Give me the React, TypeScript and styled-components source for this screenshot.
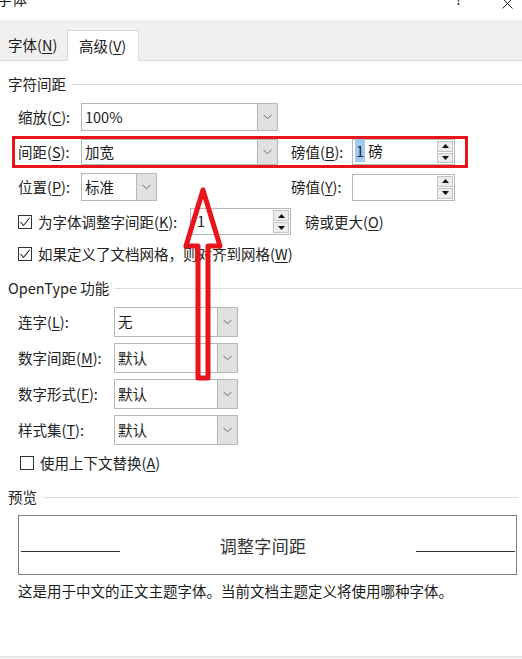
import styled, { createGlobalStyle } from 'styled-components';

const GlobalStyle = createGlobalStyle`
  html, body {
    margin: 0;
    padding: 0;
    background: #fff;
  }
  body {
    font-family: 'Noto Sans CJK SC', 'Microsoft YaHei', sans-serif;
    font-size: 14.5px;
    color: #1a1a1a;
    overflow: hidden;
  }
`;

const Acc = styled.span`
  text-decoration: underline;
  text-underline-offset: 2px;
  text-decoration-thickness: 1px;
`;

const Chevron = () => (
  <svg width='9' height='6' viewBox='0 0 9 6'>
    <polyline points='0.5,0.8 4.5,4.8 8.5,0.8' fill='none' stroke='#6b6b6b' strokeWidth='1' />
  </svg>
);

const Tri = ({ down }: { down?: boolean }) => (
  <svg width='7' height='4' viewBox='0 0 7 4'>
    <polygon points={down ? '0,0 7,0 3.5,4' : '3.5,0 7,4 0,4'} fill='#111' />
  </svg>
);

const CheckMark = () => (
  <svg width='12' height='12' viewBox='0 0 12 12'>
    <polyline points='1.5,6 4.5,9.5 10.5,2' fill='none' stroke='#222' strokeWidth='1.1' />
  </svg>
);

const Combo = ({
  value,
  width,
  height = 28
}: {
  value: string;
  width: number;
  height?: number;
}) => (
  <ComboBox $w={width} $h={height}>
    <span className='value'>{value}</span>
    <DropButton>
      <Chevron />
    </DropButton>
  </ComboBox>
);

const Spinner = ({
  children,
  width,
  height = 27,
  pad = 2
}: {
  children?: React.ReactNode;
  width: number;
  height?: number;
  pad?: number;
}) => (
  <SpinBox $w={width} $h={height} $pad={pad}>
    <span className='value'>{children}</span>
    <SpinButtons>
      <SpinButton>
        <Tri />
      </SpinButton>
      <SpinButton>
        <Tri down />
      </SpinButton>
    </SpinButtons>
  </SpinBox>
);

const Check = ({ checked }: { checked?: boolean }) => (
  <CheckBox>{checked && <CheckMark />}</CheckBox>
);

const App = () => {
  return (
    <>
      <GlobalStyle />
      <Dialog>
        <TitleBar>
          <span className='title'>字体</span>
          <span className='help'>?</span>
          <svg className='close' width='11' height='11' viewBox='0 0 11 11'>
            <path d='M0.5,0.5 L10.5,10.5 M10.5,0.5 L0.5,10.5' stroke='#222' strokeWidth='1' />
          </svg>
        </TitleBar>

        <TabStrip>
          <Tab>
            字体(<Acc>N</Acc>)
          </Tab>
          <Tab $active>
            高级(<Acc>V</Acc>)
          </Tab>
        </TabStrip>

        <Body>
          <SectionHeader $top={13}>字符间距</SectionHeader>

          <SpacingRow $top={9}>
            <Label>
              缩放(<Acc>C</Acc>):
            </Label>
            <Combo value='100%' width={197} />
          </SpacingRow>

          <Highlight>
            <SpacingRow $left={0}>
              <Label>
                间距(<Acc>S</Acc>):
              </Label>
              <Combo value='加宽' width={197} height={26} />
              <span />
              <Label>
                磅值(<Acc>B</Acc>):
              </Label>
              <Spinner width={103} height={26}>
                <Selected>1</Selected> 磅
              </Spinner>
            </SpacingRow>
          </Highlight>

          <SpacingRow $top={5}>
            <Label>
              位置(<Acc>P</Acc>):
            </Label>
            <Combo value='标准' width={76} />
            <span />
            <Label>
              磅值(<Acc>Y</Acc>):
            </Label>
            <Spinner width={103} height={27} />
          </SpacingRow>

          <CheckRow $top={7} $h={27}>
            <Check checked />
            <CheckText $w={152}>
              为字体调整字间距(<Acc>K</Acc>):
            </CheckText>
            <Spinner width={101} height={27} pad={6}>
              1
            </Spinner>
            <Label className='after'>
              磅或更大(<Acc>O</Acc>)
            </Label>
          </CheckRow>

          <CheckRow $top={9} $h={20}>
            <Check checked />
            <CheckText>
              如果定义了文档网格，则对齐到网格(<Acc>W</Acc>)
            </CheckText>
          </CheckRow>

          <SectionHeader $top={14}>OpenType 功能</SectionHeader>

          <FeatureGrid>
            <Label>
              连字(<Acc>L</Acc>):
            </Label>
            <Combo value='无' width={124} height={30} />
            <Label>
              数字间距(<Acc>M</Acc>):
            </Label>
            <Combo value='默认' width={124} height={30} />
            <Label>
              数字形式(<Acc>F</Acc>):
            </Label>
            <Combo value='默认' width={124} height={30} />
            <Label>
              样式集(<Acc>T</Acc>):
            </Label>
            <Combo value='默认' width={124} height={30} />
          </FeatureGrid>

          <CheckRow $top={8} $h={20} $indent={12}>
            <Check />
            <CheckText>
              使用上下文替换(<Acc>A</Acc>)
            </CheckText>
          </CheckRow>

          <SectionHeader $top={14} $right={4}>
            预览
          </SectionHeader>

          <PreviewBox>
            <PreviewLine $left={2} />
            <PreviewText>调整字间距</PreviewText>
            <PreviewLine $right={1} />
          </PreviewBox>

          <Description>
            这是用于中文的正文主题字体。当前文档主题定义将使用哪种字体。
          </Description>
        </Body>

        <Footer />

        <ArrowOverlay width='522' height='659' viewBox='0 0 522 659'>
          <polygon
            points='203,190 220,246 208,246 208,378 198,378 198,246 186,246'
            fill='none'
            stroke='#e8141c'
            strokeWidth='5'
            strokeLinejoin='round'
          />
        </ArrowOverlay>
      </Dialog>
    </>
  );
};

const Dialog = styled.div`
  position: relative;
  width: 522px;
  height: 659px;
  display: flex;
  flex-direction: column;
  overflow: hidden;
  background: #fff;
`;

const TitleBar = styled.div`
  height: 20px;
  display: flex;
  align-items: flex-start;
  line-height: 20px;

  .title {
    margin: -11px 0 0 -3px;
    font-size: 15px;
  }

  .help {
    margin: -11px 0 0 auto;
    font-size: 14px;
    color: #333;
  }

  .close {
    margin: -2px 9px 0 40px;
  }
`;

const TabStrip = styled.div`
  height: 40px;
  display: flex;
  align-items: flex-end;
  background: #f0f0f0;
  border-bottom: 1px solid #d9d9d9;
`;

const Tab = styled.div<{ $active?: boolean }>`
  box-sizing: border-box;
  height: ${({ $active }) => ($active ? '31px' : '30px')};
  margin-bottom: ${({ $active }) => ($active ? '-1px' : '0')};
  padding: 2px 0 0 ${({ $active }) => ($active ? '11px' : '8px')};
  width: ${({ $active }) => ($active ? '72px' : '67px')};
  line-height: 26px;
  background: ${({ $active }) => ($active ? '#fff' : 'transparent')};
  border: ${({ $active }) => ($active ? '1px solid #d9d9d9' : 'none')};
  border-bottom: none;
`;

const Body = styled.div`
  padding-left: 8px;
  display: flex;
  flex-direction: column;
`;

const SectionHeader = styled.div<{ $top: number; $right?: number }>`
  display: flex;
  align-items: center;
  gap: 6px;
  height: 20px;
  line-height: 20px;
  margin-top: ${({ $top }) => $top}px;
  margin-right: ${({ $right }) => $right ?? 0}px;
  color: #222;

  &::after {
    content: '';
    flex: 1;
    height: 1px;
    background: #dcdcdc;
  }
`;

const Label = styled.span`
  line-height: 20px;
  white-space: nowrap;
  color: #222;

  &.after {
    margin-left: 14px;
  }
`;

const SpacingRow = styled.div<{ $top?: number; $left?: number }>`
  display: grid;
  grid-template-columns: 63px 197px 13px 61px 103px;
  align-items: center;
  justify-items: start;
  margin-left: ${({ $left }) => $left ?? 10}px;
  margin-top: ${({ $top }) => $top ?? 0}px;
`;

const Highlight = styled.div`
  align-self: flex-start;
  margin: 5px 0 0 4px;
  padding: 0 10px 0 3px;
  border: 3px solid #e8141c;
`;

const ComboBox = styled.div<{ $w: number; $h: number }>`
  box-sizing: border-box;
  width: ${({ $w }) => $w}px;
  height: ${({ $h }) => $h}px;
  display: flex;
  border: 1px solid #b7b7b7;
  background: #fff;

  .value {
    flex: 1;
    padding-left: 3px;
    line-height: ${({ $h }) => $h - 3}px;
    white-space: nowrap;
    overflow: hidden;
  }
`;

const DropButton = styled.div`
  width: 19px;
  display: flex;
  align-items: center;
  justify-content: center;
  background: #e1e1e1;
  border-left: 1px solid #b7b7b7;
`;

const SpinBox = styled.div<{ $w: number; $h: number; $pad: number }>`
  box-sizing: border-box;
  width: ${({ $w }) => $w}px;
  height: ${({ $h }) => $h}px;
  display: flex;
  align-items: stretch;
  border: 1px solid #b7b7b7;
  background: #fff;

  .value {
    flex: 1;
    padding-left: ${({ $pad }) => $pad}px;
    line-height: ${({ $h }) => $h - 4}px;
    white-space: nowrap;
  }
`;

const SpinButtons = styled.div`
  width: 16px;
  margin: 1px 1px 1px 0;
  display: flex;
  flex-direction: column;
  gap: 1px;
`;

const SpinButton = styled.div`
  flex: 1;
  display: flex;
  align-items: center;
  justify-content: center;
  background: #ececec;
  border: 1px solid #c4c4c4;
`;

const Selected = styled.span`
  background: #9dcbf1;
  padding: 1px 1px;
`;

const CheckRow = styled.div<{ $top: number; $h: number; $indent?: number }>`
  display: flex;
  align-items: center;
  height: ${({ $h }) => $h}px;
  margin-top: ${({ $top }) => $top}px;
  margin-left: ${({ $indent }) => $indent ?? 10}px;
`;

const CheckBox = styled.div`
  box-sizing: border-box;
  width: 14px;
  height: 14px;
  border: 1px solid #333;
  background: #fff;
  display: flex;
  align-items: center;
  justify-content: center;
  margin-right: 6px;
`;

const CheckText = styled.span<{ $w?: number }>`
  line-height: 20px;
  white-space: nowrap;
  color: #222;
  width: ${({ $w }) => ($w ? `${$w}px` : 'auto')};
`;

const FeatureGrid = styled.div`
  display: grid;
  grid-template-columns: 96px 124px;
  grid-auto-rows: 30px;
  row-gap: 6px;
  align-items: center;
  margin: 9px 0 0 10px;
`;

const PreviewBox = styled.div`
  box-sizing: border-box;
  width: 499px;
  height: 60px;
  margin: 8px 0 0 10px;
  border: 1px solid #7d7d7d;
  display: flex;
  align-items: flex-start;
`;

const PreviewLine = styled.div<{ $left?: number; $right?: number }>`
  width: 99px;
  height: 1px;
  margin-top: 35px;
  margin-left: ${({ $left }) => $left ?? 0}px;
  margin-right: ${({ $right }) => $right ?? 0}px;
  background: #333;
`;

const PreviewText = styled.div`
  flex: 1;
  text-align: center;
  padding-right: 10px;
  margin-top: 18px;
  font-size: 17px;
  line-height: 24px;
  color: #333;
  letter-spacing: 0.3px;
`;

const Description = styled.div`
  margin: 6px 0 0 10px;
  line-height: 20px;
  white-space: nowrap;
  color: #1a1a1a;
`;

const Footer = styled.div`
  margin-top: auto;
  height: 2px;
  border-top: 1px solid #e0e0e0;
  background: #f0f0f0;
`;

const ArrowOverlay = styled.svg`
  position: absolute;
  top: 0;
  left: 0;
  pointer-events: none;
`;

export default App;
